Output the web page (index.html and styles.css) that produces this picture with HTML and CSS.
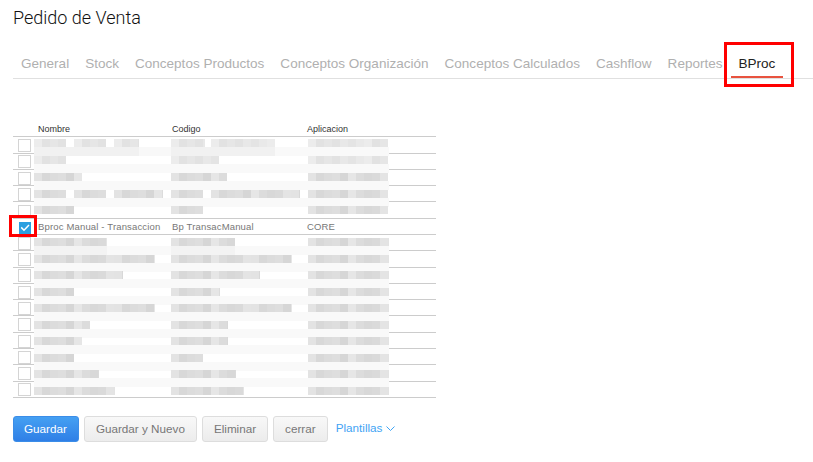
FILE: index.html
```html
<!DOCTYPE html>
<html lang="es">
<head>
<meta charset="utf-8">
<title>Pedido de Venta</title>
<link rel="stylesheet" href="styles.css">
</head>
<body>
<main class="page">
  <h1 class="title">Pedido de Venta</h1>
  <nav class="tabs">
    <a class="tab">General</a>
    <a class="tab">Stock</a>
    <a class="tab">Conceptos Productos</a>
    <a class="tab">Conceptos Organización</a>
    <a class="tab">Conceptos Calculados</a>
    <a class="tab">Cashflow</a>
    <a class="tab">Reportes</a>
    <a class="tab active">BProc<span class="mark tab-mark"></span></a>
  </nav>
  <section class="table">
    <div class="head"><span></span><span class="c1">Nombre</span><span class="c2">Codigo</span><span class="c3">Aplicacion</span></div>
    <div class="rows">
      <div class="row o2"><span class="box"></span><div class="cell"><i class="m lt" style="width:32px"></i><i class="m lt" style="width:32px;margin-left:8px"></i><i class="m lt" style="width:25px;margin-left:8px"></i></div><div class="cell"><i class="m lt" style="width:34px"></i><i class="m lt" style="width:64px;margin-left:6px"></i></div><div class="cell ca"><i class="m lt" style="width:80px"></i></div><i class="band dim"></i></div>
      <div class="row o2"><span class="box up"></span><div class="cell"><i class="m lt" style="width:32px"></i></div><div class="cell"><i class="m lt" style="width:48px"></i></div><div class="cell ca"><i class="m lt" style="width:80px"></i></div><i class="band"></i></div>
      <div class="row o3"><span class="box"></span><div class="cell"><i class="m" style="width:48px"></i></div><div class="cell"><i class="m" style="width:56px"></i></div><div class="cell ca"><i class="m" style="width:80px"></i></div><i class="band"></i></div>
      <div class="row o4"><span class="box"></span><div class="cell"><i class="m" style="width:32px"></i><i class="m" style="width:32px;margin-left:8px"></i><i class="m" style="width:49px;margin-left:8px"></i></div><div class="cell"><i class="m" style="width:32px"></i><i class="m" style="width:89px;margin-left:8px"></i></div><div class="cell ca"><i class="m" style="width:80px"></i></div><i class="band"></i></div>
      <div class="row o4"><span class="box down"></span><div class="cell"><i class="m" style="width:40px"></i></div><div class="cell"><i class="m" style="width:32px"></i></div><div class="cell ca"><i class="m" style="width:80px"></i></div></div>
      <div class="row selected"><span class="box checked"><svg class="tick" viewBox="0 0 12 12"><path d="M2.2 5.4 5 8.2 10 3"/></svg><span class="mark check-mark"></span></span><div class="cell c1">Bproc Manual - Transaccion</div><div class="cell c2">Bp TransacManual</div><div class="cell c3">CORE</div></div>
      <div class="row o3"><span class="box"></span><div class="cell"><i class="m" style="width:73px"></i></div><div class="cell"><i class="m" style="width:64px"></i></div><div class="cell ca"><i class="m" style="width:81px"></i></div><i class="band dim2"></i></div>
      <div class="row o4"><span class="box"></span><div class="cell"><i class="m" style="width:121px"></i></div><div class="cell"><i class="m" style="width:121px"></i></div><div class="cell ca"><i class="m" style="width:81px"></i></div><i class="band"></i></div>
      <div class="row o3"><span class="box up"></span><div class="cell"><i class="m" style="width:89px"></i></div><div class="cell"><i class="m" style="width:89px"></i></div><div class="cell ca"><i class="m" style="width:81px"></i></div><i class="band"></i></div>
      <div class="row o4"><span class="box"></span><div class="cell"><i class="m" style="width:40px"></i></div><div class="cell"><i class="m" style="width:49px"></i></div><div class="cell ca"><i class="m" style="width:81px"></i></div><i class="band"></i></div>
      <div class="row o4"><span class="box"></span><div class="cell"><i class="m" style="width:121px"></i></div><div class="cell"><i class="m" style="width:121px"></i></div><div class="cell ca"><i class="m" style="width:81px"></i></div><i class="band"></i></div>
      <div class="row o5"><span class="box"></span><div class="cell"><i class="m" style="width:56px"></i></div><div class="cell"><i class="m" style="width:57px"></i></div><div class="cell ca"><i class="m" style="width:81px"></i></div><i class="band"></i></div>
      <div class="row o4"><span class="box"></span><div class="cell"><i class="m" style="width:48px"></i></div><div class="cell"><i class="m" style="width:57px"></i></div><div class="cell ca"><i class="m" style="width:81px"></i></div><i class="band"></i></div>
      <div class="row o5"><span class="box"></span><div class="cell"><i class="m" style="width:40px"></i></div><div class="cell"><i class="m" style="width:32px"></i></div><div class="cell ca"><i class="m" style="width:81px"></i></div><i class="band"></i></div>
      <div class="row o5"><span class="box"></span><div class="cell"><i class="m" style="width:65px"></i></div><div class="cell"><i class="m" style="width:65px"></i></div><div class="cell ca"><i class="m" style="width:81px"></i></div><i class="band"></i></div>
      <div class="row o5"><span class="box up"></span><div class="cell"><i class="m" style="width:81px"></i></div><div class="cell"><i class="m" style="width:73px"></i></div><div class="cell ca"><i class="m" style="width:81px"></i></div></div>
    </div>
  </section>
  <div class="actions">
    <button class="btn primary">Guardar</button>
    <button class="btn">Guardar y Nuevo</button>
    <button class="btn">Eliminar</button>
    <button class="btn">cerrar</button>
    <a class="link">Plantillas<svg class="chev" viewBox="0 0 9 5"><path d="M.5.5 4.5 4.5 8.5.5"/></svg></a>
  </div>
</main>
</body>
</html>
```
FILE: styles.css
```css
* { box-sizing: border-box; }
html, body { margin: 0; background: #fff; }
body { font-family: "Liberation Sans", Arial, sans-serif; }
.page { padding-left: 13px; height: 462px; overflow: hidden; }
.title { margin: 0; padding-top: 6px; height: 50px; font: 300 18px/24px Roboto, sans-serif; color: #111; }
.tabs { display: flex; height: 29px; border-bottom: 1px solid #e0e0e0; font-size: 13.54px; line-height: 27px; color: #b0b0b0; }
.tab { position: relative; padding: 0 8px; white-space: nowrap; }
.tab.active { color: #222; }
.tab.active::after { content: ""; position: absolute; left: 0; right: 0; bottom: 0; height: 2px; background: #e8533f; }
.mark { position: absolute; border: 3px solid #f00; display: block; }
.tab-mark { left: -7px; right: -11px; top: -8px; height: 45px; }
.table { margin-top: 42px; width: 423px; font-size: 9.5px; }
.head { display: grid; grid-template-columns: 21px 137px 136px 129px; height: 16px; border-bottom: 1px solid #ccc; font-size: 9px; line-height: 17px; color: #333; }
.rows { display: grid; grid-template-columns: 21px 137px 136px 129px; grid-template-rows: 17px 16px 16px 16px 17px 16px 16px 17px 16px 16px 16px 17px 16px 16px 17px 16px; }
.row { position: relative; display: grid; grid-column: 1 / -1; grid-template-columns: subgrid; border-bottom: 1px solid #ccc; }
.o2 { --o: 2px; } .o3 { --o: 3px; } .o4 { --o: 4px; } .o5 { --o: 5px; }
.c1 { padding-left: 4px; } .c2 { padding-left: 1px; } .c3 { padding-left: 0; }
.cell { display: flex; align-items: flex-start; padding-top: var(--o, 0); min-width: 0; white-space: nowrap; }
.ca { padding-left: 1px; }
.selected .cell { color: #777; line-height: 15px; letter-spacing: .16px; }
.m { display: block; height: 8px; flex: none; background: repeating-linear-gradient(90deg, #e3e3e3 0 8px, #d8d8d8 8px 16px, #dcdcdc 16px 24px, #dedede 24px 32px, #d6d6d6 32px 40px, #e6e6e6 40px 48px, #dcdcdc 48px 56px, #d8d8d8 56px 64px, #dadada 64px 72px, #e4e4e4 72px 80px); }
.m.lt { background: repeating-linear-gradient(90deg, #ececec 0 8px, #e2e2e2 8px 16px, #e6e6e6 16px 24px, #e2e2e2 24px 32px, #e8e8e8 32px 40px, #e4e4e4 40px 48px, #e9e9e9 48px 56px); }
.band { position: absolute; left: 21px; width: 355px; top: calc(var(--o) + 8px); height: 9px; background: #f9f9f9; }
.band.dim { background: linear-gradient(90deg, #f1f1f1 0 105px, #f8f8f8 105px 137px, #f1f1f1 137px 241px, #f9f9f9 241px); }
.band.dim2 { background: linear-gradient(90deg, #f3f3f3 0 73px, #f9f9f9 73px 137px, #f3f3f3 137px 201px, #f9f9f9 201px); }
.box { position: relative; display: block; width: 13px; height: 13px; margin: 2px 0 0 5px; border: 1.5px solid #d4d4d4; background: #fff; }
.box.up { margin-top: 1px; }
.box.down { margin-top: 3px; }
.box.checked { width: 12px; height: 12px; margin: 3px 0 0 6px; border: 0; background: #2b9fe0; }
.tick { display: block; width: 12px; height: 12px; fill: none; stroke: #fff; stroke-width: 1.5; }
.check-mark { left: -10px; top: -7px; width: 28px; height: 22px; }
.actions { display: flex; align-items: center; margin-top: 18px; gap: 5px; }
.btn { height: 26px; padding: 0 11px 2px; border: 1px solid #ddd; border-radius: 3px; font: 11.7px "Liberation Sans", Arial, sans-serif; color: #777; background: linear-gradient(#f8f8f8, #ececec); }
.btn.primary { border-color: #3b8de8; color: #fff; background: linear-gradient(#45a0f2, #2f7fe6); padding: 0 11px 2px 10px; }
.link { display: flex; align-items: center; margin-left: 3px; padding-bottom: 3px; font-size: 11.7px; color: #3fa4f4; }
.chev { width: 9px; height: 5px; margin: 2px 0 0 4px; fill: none; stroke: #3fa4f4; stroke-width: 1; }
```
